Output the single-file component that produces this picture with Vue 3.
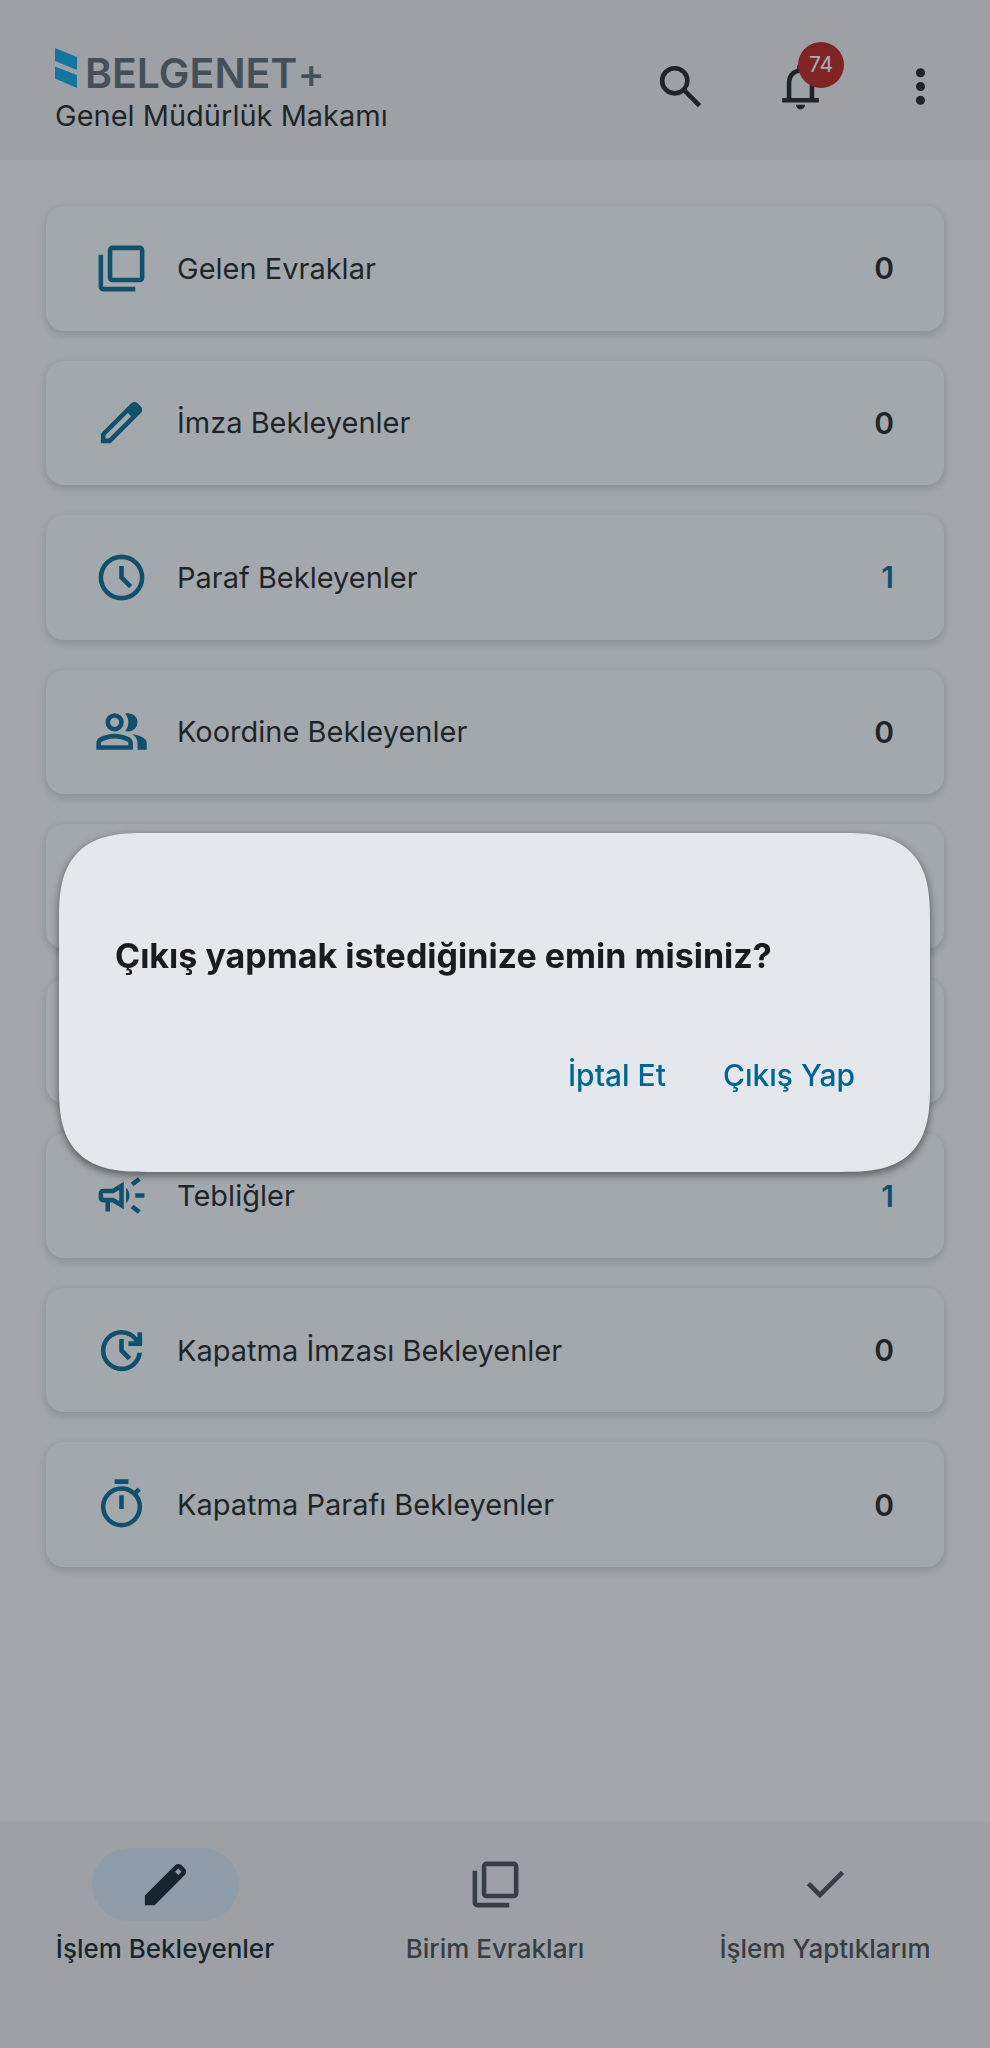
<script setup>
const icons = {
  search: 'M19.6 21l-6.3-6.3A6.1 6.1 0 0 1 9.5 16q-2.725 0-4.612-1.888T3 9.5t1.888-4.612T9.5 3t4.613 1.888T16 9.5a6.1 6.1 0 0 1-1.3 3.8l6.3 6.3zM9.5 14q1.875 0 3.188-1.312T14 9.5t-1.312-3.187T9.5 5 6.313 6.313 5 9.5t1.313 3.188T9.5 14',
  bell: 'M4 19v-2h2v-7q0-2.075 1.25-3.687T10.5 4.2v-.7q0-.625.438-1.062T12 2t1.063.438T13.5 3.5v.7q2 .5 3.25 2.113T18 10v7h2v2zm8 3q-.825 0-1.412-.587T10 20h4q0 .825-.587 1.413T12 22m-4-5h8v-7q0-1.65-1.175-2.825T12 6 9.175 7.175 8 10z',
  more: 'M12 20q-.825 0-1.412-.587T10 18t.588-1.412T12 16t1.413.588T14 18t-.587 1.413T12 20m0-6q-.825 0-1.412-.587T10 12t.588-1.412T12 10t1.413.588T14 12t-.587 1.413T12 14m0-6q-.825 0-1.412-.587T10 6t.588-1.412T12 4t1.413.588T14 6t-.587 1.413T12 8',
  stack: 'M8 18q-.825 0-1.412-.587T6 16V4q0-.825.588-1.412T8 2h12q.825 0 1.413.588T22 4v12q0 .825-.587 1.413T20 18zm0-2h12V4H8zm-4 6q-.825 0-1.412-.587T2 20V6h2v14h14v2z',
  pencil: 'M5 19h1.425L16.2 9.225 14.775 7.8 5 17.575zm-2 2v-4.25L16.2 3.575q.3-.275.663-.425t.762-.15.775.15.65.45L20.425 5q.3.275.438.65T21 6.4q0 .4-.137.763t-.438.662L7.25 21z',
  pencilSolid: 'M3 21v-4.25L16.2 3.575q.3-.275.663-.425t.762-.15.775.15.65.45L20.425 5q.3.275.438.65T21 6.4q0 .4-.137.763t-.438.662L7.25 21zM17.6 5l-1.4 1.4 1.4 1.4L19 6.4z',
  clock: 'M15.3 16.7l1.4-1.4-3.7-3.7V7h-2v5.4zM12 22a10 10 0 1 1 0-20 10 10 0 0 1 0 20m0-2a8 8 0 1 0 0-16 8 8 0 0 0 0 16',
  group: 'M1 20v-2.8q0-.85.438-1.562T2.6 14.55q1.55-.775 3.15-1.162T9 13t3.25.388 3.15 1.162q.725.375 1.163 1.088T17 17.2V20zm18 0v-3q0-1.1-.612-2.113T16.65 13.15q1.275.15 2.4.513t2.1.887q.9.5 1.375 1.112T23 17v3zM9 12q-1.65 0-2.825-1.175T5 8t1.175-2.825T9 4t2.825 1.175T13 8t-1.175 2.825T9 12m10-4q0 1.65-1.175 2.825T15 12q-.275 0-.7-.062T13.6 11.8q.675-.8 1.037-1.775T15 8t-.362-2.025T13.6 4.2q.35-.125.7-.163T15 4q1.65 0 2.825 1.175T19 8M3 18h12v-.8q0-.275-.137-.5t-.363-.35q-1.35-.675-2.725-1.013T9 15t-2.775.338T3.5 16.35q-.225.125-.363.35T3 17.2zm6-8q.825 0 1.413-.588T11 8t-.588-1.413T9 6t-1.413.588T7 8t.588 1.413T9 10',
  campaign: 'M18 13v-2h4v2zm1.2 7L16 17.6l1.2-1.6 3.2 2.4zm-2-12L16 6.4 19.2 4l1.2 1.6zM5 19v-4H4q-.825 0-1.412-.587T2 13v-2q0-.825.588-1.412T4 9h4l5-3v12l-5-3H7v4zm6-4.55v-4.9L8.55 11H4v2h4.55zM14 15.35v-6.7q.675.6 1.088 1.463T15.5 12t-.413 1.888T14 15.35',
  update: 'M12 21q-1.875 0-3.512-.712t-2.85-1.925-1.925-2.85T3 12t.713-3.512 1.924-2.85 2.85-1.925T12 3q2.05 0 3.888.875T19 6.35V4h2v6h-6V8h2.75q-1.025-1.4-2.525-2.2T12 5Q9.075 5 7.038 7.038T5 12t2.038 4.963T12 19q2.625 0 4.588-1.7T18.9 13h2.05q-.375 3.425-2.937 5.713T12 21m2.8-4.8L11 12.4V7h2v4.6l3.2 3.2z',
  timer: 'M9 3V1h6v2zm2 11h2V8h-2zm1 8q-1.85 0-3.488-.712T5.65 19.35t-1.937-2.863T3 13t.713-3.488T5.65 6.65t2.863-1.937T12 4q1.55 0 2.975.5t2.675 1.45l1.4-1.4 1.4 1.4-1.4 1.4Q20 8.6 20.5 10.025T21 13q0 1.85-.713 3.488T18.35 19.35t-2.863 1.938T12 22m0-2q2.9 0 4.95-2.05T19 13t-2.05-4.95T12 6 7.05 8.05 5 13t2.05 4.95T12 20',
  check: 'M9.55 18l-5.7-5.7 1.425-1.425L9.55 15.15l9.175-9.175L20.15 7.4z',
}

const folders = [
  { label: 'Gelen Evraklar', icon: 'stack', count: 0 },
  { label: 'İmza Bekleyenler', icon: 'pencil', count: 0 },
  { label: 'Paraf Bekleyenler', icon: 'clock', count: 1 },
  { label: 'Koordine Bekleyenler', icon: 'group', count: 0 },
  {},
  {},
  { label: 'Tebliğler', icon: 'campaign', count: 1 },
  { label: 'Kapatma İmzası Bekleyenler', icon: 'update', count: 0 },
  { label: 'Kapatma Parafı Bekleyenler', icon: 'timer', count: 0 },
]

const tabs = [
  { label: 'İşlem Bekleyenler', icon: 'pencilSolid', active: true },
  { label: 'Birim Evrakları', icon: 'stack', active: false },
  { label: 'İşlem Yaptıklarım', icon: 'check', active: false },
]
</script>

<template>
  <div class="screen">
    <header class="topbar">
      <div class="brand">
        <div class="logo">
          <svg class="mark" viewBox="0 0 22 40" aria-hidden="true">
            <path d="M0 0l22 9v13L0 13z" />
            <path d="M0 18.500l22 8.500v13L0 30.500z" />
          </svg>
          <span class="name">BELGENET<span class="plus">+</span></span>
        </div>
        <div class="unit">Genel Müdürlük Makamı</div>
      </div>
      <div class="tools">
        <button class="tool" type="button" aria-label="Ara">
          <svg class="icon" viewBox="0 0 24 24"><path :d="icons.search" /></svg>
        </button>
        <button class="tool" type="button" aria-label="Bildirimler">
          <svg class="icon" viewBox="0 0 24 24"><path :d="icons.bell" /></svg>
          <span class="badge">74</span>
        </button>
        <button class="tool" type="button" aria-label="Menü">
          <svg class="icon" viewBox="0 0 24 24"><path :d="icons.more" /></svg>
        </button>
      </div>
    </header>

    <main class="folders">
      <a v-for="(f, i) in folders" :key="i" class="card" href="#">
        <template v-if="f.label">
          <svg class="icon" viewBox="0 0 24 24" aria-hidden="true"><path :d="icons[f.icon]" /></svg>
          <span class="label">{{ f.label }}</span>
          <span class="count" :class="{ some: f.count > 0 }">{{ f.count }}</span>
        </template>
      </a>
    </main>

    <nav class="tabs">
      <a v-for="t in tabs" :key="t.label" class="tab" :class="{ active: t.active }" href="#">
        <span class="pill">
          <svg class="icon" viewBox="0 0 24 24" aria-hidden="true"><path fill-rule="evenodd" :d="icons[t.icon]" /></svg>
        </span>
        <span class="tab-label">{{ t.label }}</span>
      </a>
    </nav>

    <div class="backdrop">
      <section class="dialog" role="alertdialog" aria-modal="true" aria-labelledby="dialog-title">
        <h2 id="dialog-title" class="title">Çıkış yapmak istediğinize emin misiniz?</h2>
        <div class="actions">
          <button class="action" type="button">İptal Et</button>
          <button class="action" type="button">Çıkış Yap</button>
        </div>
      </section>
    </div>
  </div>
</template>

<style>
body {
  margin: 0;
  background: #f5f6f9;
}
</style>

<style scoped>
.screen {
  display: flex;
  flex-direction: column;
  min-height: 100vh;
  background: #f5f6f9;
  color: #191c1e;
  font-family: Inter, "Liberation Sans", sans-serif;
  font-size: 29px;
}

a {
  color: inherit;
  text-decoration: none;
}

button {
  margin: 0;
  border: 0;
  background: none;
  color: inherit;
  font: inherit;
}

.icon {
  flex: none;
  display: block;
  width: 55px;
  height: 55px;
  fill: currentColor;
}

.topbar {
  display: flex;
  justify-content: space-between;
  align-items: flex-start;
  padding: 40px 24px 26px 55px;
  background: #ebecef;
}

.brand {
  padding-top: 8px;
}

.logo {
  display: flex;
  align-items: flex-end;
  gap: 8px;
}

.mark {
  width: 22px;
  height: 40px;
  fill: #08a2e4;
}

.name {
  color: #576571;
  font-size: 41px;
  font-weight: 600;
  line-height: 30px;
}

.plus {
  font-weight: 500;
}

.unit {
  margin-top: 10px;
  line-height: 36px;
}

.tools {
  display: flex;
  gap: 28px;
}

.tool {
  position: relative;
  display: grid;
  place-items: center;
  width: 92px;
  height: 92px;
  padding: 0;
}

.badge {
  position: absolute;
  top: 2px;
  right: 2px;
  width: 46px;
  border-radius: 23px;
  background: #ba1a1a;
  color: #fff;
  font-size: 21px;
  font-weight: 400;
  line-height: 46px;
}

.folders {
  flex: 1;
  display: grid;
  grid-auto-rows: 1fr;
  gap: 30px;
  padding: 46px 46px 254px;
}

.card {
  display: flex;
  align-items: center;
  gap: 28px;
  padding: 0 50px 0 48px;
  border-radius: 18px;
  background: #f6f7fa;
  box-shadow: 0 3px 9px 1px rgba(0, 0, 0, 0.16);
}

.card .icon {
  color: #006590;
}

.label {
  flex: 1;
}

.count {
  font-size: 30px;
  font-weight: 600;
}

.some {
  color: #006590;
}

.tabs {
  display: grid;
  grid-template-columns: repeat(3, 1fr);
  padding: 27px 0 81px;
  background: #ebecef;
}

.tab {
  display: flex;
  flex-direction: column;
  align-items: center;
  gap: 10px;
  color: #41474d;
  font-size: 26px;
  font-weight: 500;
  line-height: 36px;
}

.tab.active {
  color: #0b1d29;
}

.pill {
  display: grid;
  place-items: center;
  width: 147px;
  height: 73px;
  border-radius: 37px;
}

.active .pill {
  background: #d3e5f5;
}

.backdrop {
  position: fixed;
  inset: 0;
  display: flex;
  align-items: center;
  padding: 0 60px 43px 59px;
  background: rgba(41, 50, 56, 0.4);
}

.dialog {
  flex: 1;
  padding: 101px 56px 51px;
  border-radius: 68px;
  background: #e4e8ed;
  box-shadow: 0 3px 7px 1px rgba(0, 0, 0, 0.4);
}

@supports (corner-shape: superellipse(1.5)) {
  .dialog {
    border-radius: 88px;
    corner-shape: superellipse(1.5);
  }
}

.title {
  margin: 0 0 51px;
  font-size: 34px;
  font-weight: 700;
  line-height: 44px;
}

.actions {
  display: flex;
  justify-content: flex-end;
  gap: 19px;
}

.action {
  height: 92px;
  padding: 0 19px;
  color: #006590;
  font-size: 30px;
  font-weight: 500;
}
</style>
